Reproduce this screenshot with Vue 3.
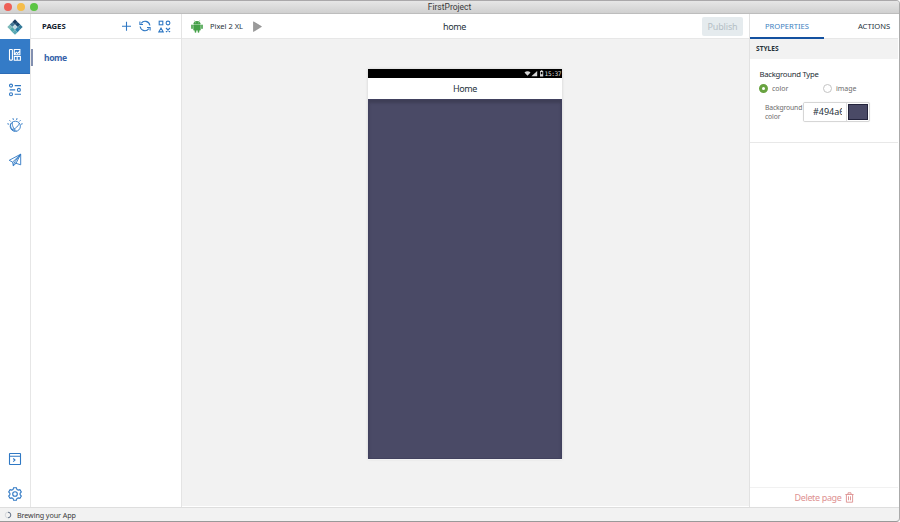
<script setup>
const watsonRays = [-75, -45, -15, 15, 45, 75]
</script>

<template>
  <div class="window">
    <header class="titlebar">
      <div class="lights"><i class="red"></i><i class="amber"></i><i class="green"></i></div>
      <span class="app-title">FirstProject</span>
    </header>

    <div class="workspace">
      <nav class="rail">
        <div class="logo">
          <svg width="16" height="16" viewBox="0 0 16 16">
            <path d="M8 .3 10.6 2.9 8 5.5 5.4 2.9Z" fill="#173a5e" />
            <path d="M5.4 2.9 8 5.5 5.4 8.1 2.8 5.5Z" fill="#417594" />
            <path d="M10.6 2.9 13.2 5.5 10.6 8.1 8 5.5Z" fill="#17456c" />
            <path d="M2.8 5.5 5.4 8.1 2.9 10.6.3 8Z" fill="#79b8b9" />
            <path d="M8 5.5 10.6 8.1 8 10.7 5.4 8.1Z" fill="#c3d9e2" />
            <path d="M13.2 5.5 15.7 8 13.1 10.6 10.6 8.1Z" fill="#327998" />
            <path d="M5.4 8.1 8 10.7 5.4 13.2 2.9 10.6Z" fill="#4fa5aa" />
            <path d="M10.6 8.1 13.1 10.6 10.6 13.2 8 10.7Z" fill="#277da8" />
            <path d="M8 10.7 10.6 13.2 8 15.8 5.4 13.2Z" fill="#59a8b4" />
          </svg>
        </div>
        <button class="rail-item active">
          <svg width="14" height="14" viewBox="0 0 14 14" fill="none" stroke="#fff" stroke-width="1.1">
            <rect x="1.5" y="1.5" width="2.9" height="10.6" rx=".5" />
            <path d="M6.3 1.5h5.6v5.2H6.3zM6.3 8.5h2.9v3.7H6.3zM9.2 8.5h3.2v3.7H9.2zM6.4 6.4l2-2.2 1.2 1.2 2.2-2.2" />
          </svg>
        </button>
        <button class="rail-item">
          <svg width="14" height="14" viewBox="0 0 14 14" class="line">
            <circle cx="3" cy="2.6" r="1.5" /><path d="M6.7 2.6H13M1.7 6.9h5.5M6.7 11.3H13" />
            <circle cx="10.9" cy="6.9" r="1.5" /><circle cx="3" cy="11.3" r="1.5" />
          </svg>
        </button>
        <button class="rail-item">
          <svg width="16" height="16" viewBox="0 0 16 16" class="line thin">
            <circle cx="8.3" cy="9.3" r="5.1" />
            <path d="M4.2 6.2C2.4 9 4.6 13 8 13.9M4 12.2c2.8 1 6.8-2.2 8.4-6M5.5 5.2c-.5 2.9.5 6.5 4 8.9" />
            <path v-for="a in watsonRays" :key="a" d="M8 .9v1.8" :transform="`rotate(${a} 8 8.8)`" />
          </svg>
        </button>
        <button class="rail-item">
          <svg width="14" height="14" viewBox="0 0 14 14" class="line thin">
            <path d="M12.7 1.2 1.2 7.3l3.4 1.8L12.7 1.2V11.8L8 10.3M4.6 9.1l.7 3.7L8 10.3M5.3 12.8l1-3.3 6.4-8.3L8 10.3 6.3 9.5" />
          </svg>
        </button>
        <div class="spacer"></div>
        <button class="rail-item low">
          <svg width="14" height="14" viewBox="0 0 14 14" class="line">
            <rect x="1.5" y="1.5" width="11" height="11" rx=".4" /><path d="M1.5 4.3h11M5.2 6.5 7 8.1 5.2 9.7" />
          </svg>
        </button>
        <button class="rail-item low">
          <svg width="14" height="14" viewBox="0 0 14 14" class="line">
            <path d="M5.6.7h2.8l.5 1.7 1.3.7 1.7-.5 1.4 2.4-1.2 1.3v1.4l1.2 1.3-1.4 2.4-1.7-.5-1.3.7-.5 1.7H5.6l-.5-1.7-1.3-.7-1.7.5L.7 9l1.2-1.3V6.3L.7 5l1.4-2.4 1.7.5 1.3-.7Z" /><circle cx="7" cy="7" r="2.3" />
          </svg>
        </button>
      </nav>

      <aside class="pages">
        <div class="bar pages-head">
          <b>PAGES</b>
          <div class="tools">
            <svg width="11" height="12" viewBox="0 0 11 12" class="line"><path d="M5.5 1.8v9M1 6.3h9" /></svg>
            <svg width="12" height="12" viewBox="0 0 12 12" class="line">
              <path d="M2.2 3.4C4.5-.1 10 .8 10.9 5.5M.9 1.4v3.1H4M9.8 8.6C7.5 12.1 2 11.2 1.1 6.5M11.1 10.6V7.5H8" />
            </svg>
            <svg width="13" height="13" viewBox="0 0 13 13" class="line">
              <rect x="1.2" y="1.2" width="3.6" height="3.6" /><circle cx="10" cy="3" r="1.9" />
              <path d="M3 8 5.2 11.9H.8ZM8 8l4 4M12 8l-4 4" />
            </svg>
          </div>
        </div>
        <a class="page-link">home</a>
      </aside>

      <main class="stage">
        <div class="bar stage-head">
          <div class="device">
            <svg width="12" height="13" viewBox="0 0 12 13" fill="#43a047">
              <path d="M2.3 4.2C2.3 2.2 4 .9 6 .9s3.7 1.3 3.7 3.3Z" />
              <rect x="2.3" y="4.6" width="7.4" height="5.8" rx=".7" />
              <rect x=".2" y="4.6" width="1.6" height="4.4" rx=".8" /><rect x="10.2" y="4.6" width="1.6" height="4.4" rx=".8" />
              <rect x="3.7" y="9" width="1.6" height="3.8" rx=".8" /><rect x="6.7" y="9" width="1.6" height="3.8" rx=".8" />
              <path d="m3.3.4 1 1.5M8.7.4l-1 1.5" stroke="#43a047" stroke-width=".5" />
              <circle cx="4.4" cy="2.8" r=".35" fill="#fff" /><circle cx="7.6" cy="2.8" r=".35" fill="#fff" />
            </svg>
            <span>Pixel 2 XL</span>
            <svg width="9" height="11" viewBox="0 0 9 11"><path d="M.5.8 8.5 5.6.5 10.5Z" fill="#9b9b9b" stroke="#858585" stroke-width=".6" /></svg>
          </div>
          <span class="page-title">home</span>
          <button class="publish">Publish</button>
        </div>
        <div class="canvas">
          <div class="phone">
            <div class="phone-status">
              <svg width="21" height="7" viewBox="0 0 21 7" fill="#d5d5d5">
                <path d="M.5 2.4C2.1.7 4.9.7 6.5 2.4L3.5 5.8Z" /><path d="M13.2.9V6.2H7.4Z" />
                <path d="M16 1h.8V.3h1.6V1h.8v5.6H16Zm.8 1v2.2h1.6V2Z" fill-rule="evenodd" />
              </svg>
              <span>15:37</span>
            </div>
            <div class="phone-head">Home</div>
            <div class="phone-body"></div>
          </div>
        </div>
      </main>

      <aside class="inspector">
        <div class="bar tabs">
          <div class="tab on"><span>PROPERTIES</span></div>
          <div class="tab"><span class="actions">ACTIONS</span></div>
        </div>
        <div class="section"><b>STYLES</b></div>
        <div class="form">
          <div class="label">Background Type</div>
          <div class="radios">
            <label><i class="radio checked"></i><span>color</span></label>
            <label><i class="radio"></i><span>image</span></label>
          </div>
          <div class="color-row">
            <div class="hint">Background<br />color</div>
            <div class="color-input"><input class="hex" type="text" value="#494a66" /><div class="swatch"><i></i></div></div>
          </div>
        </div>
        <div class="spacer"></div>
        <div class="delete">
          <span>Delete page</span>
          <svg width="9" height="11" viewBox="0 0 9 11" fill="none" stroke="#dc8f8f" stroke-width=".9">
            <path d="M.4 2.5h8.2M3 2.3V.8h3v1.5M1.4 2.7v7.5h6.2V2.7M3.5 4.3v4M5.5 4.3v4" />
          </svg>
        </div>
      </aside>
    </div>

    <footer class="statusbar">
      <svg width="8" height="8" viewBox="0 0 8 8" fill="none"><circle cx="4" cy="4" r="2.8" stroke="#d5d8dc" /><path d="M4 1.2A2.8 2.8 0 0 1 4 6.8" stroke="#68768b" /></svg>
      <span>Brewing your App</span>
    </footer>
  </div>
</template>

<style>
body { margin: 0; overflow: hidden; background: #fff; }
</style>

<style scoped>
* { box-sizing: border-box; }
.window { width: 900px; height: 522px; display: flex; flex-direction: column; border-top: 1px solid #aaa8aa; border-right: 1px solid #aaa; border-bottom: 1px solid #999; border-radius: 0 4px 4px 0; background: #f2f2f2; font-family: "Noto Sans", sans-serif; color: #26323b; overflow: hidden; }
button { border: 0; padding: 0; background: none; font-family: inherit; }
svg { display: block; flex: none; }
.line { fill: none; stroke: #2f78c4; stroke-width: 1.1; }
.thin { stroke-width: .9; }
.spacer { flex: 1; }
.titlebar { height: 13px; flex: none; display: grid; grid-template-columns: 1fr auto 1fr; align-items: center; background: linear-gradient(#e6e6e6, #d0d0d0); border-bottom: 1px solid #bdbdbd; }
.lights { display: flex; gap: 5px; padding-left: 4px; }
.lights i { width: 8px; height: 8px; border-radius: 50%; }
.red { background: #ee6056; }
.amber { background: #f5bd4a; }
.green { background: #5cc544; }
.app-title { font: 8.5px/12px Roboto, sans-serif; color: #3a3a3a; }
.workspace { height: 493px; flex: none; display: flex; background: #fff; padding-right: 1px; }
.rail { width: 31px; border-right: 1px solid #e6e6e6; display: flex; flex-direction: column; flex: none; }
.logo { height: 25px; display: flex; align-items: center; justify-content: center; flex: none; }
.rail-item { height: 35px; padding-bottom: 3px; display: flex; align-items: center; justify-content: center; flex: none; }
.rail-item.active { background: #347bc7; border-bottom: 1px solid #2d6bb5; }
.rail-item.low { padding: 9px 0 0; }
.bar { height: 25px; flex: none; border-bottom: 1px solid #e7e7e7; display: flex; align-items: center; }
.pages { width: 151px; flex: none; border-right: 1px solid #e4e4e4; }
.pages-head { padding: 0 10px 0 11px; justify-content: space-between; }
.pages-head b { font-size: 7.7px; color: #14212d; }
.tools { display: flex; align-items: center; gap: 7px; }
.page-link { display: flex; align-items: center; height: 17px; margin-top: 10px; padding-left: 11px; border-left: 2px solid #8290b0; font-size: 8.6px; letter-spacing: -.45px; font-weight: 700; color: #3763aa; }
.stage { width: 568px; flex: none; display: flex; flex-direction: column; border-right: 1px solid #e2e2e2; }
.stage-head { display: grid; grid-template-columns: 250px auto 1fr; padding: 0 6px 0 10px; justify-items: start; }
.device { display: flex; align-items: center; font-size: 7.5px; margin-left: -1px; }
.device span { margin: 0 10px 0 7px; }
.page-title { font-size: 9px; letter-spacing: -.4px; padding-left: 1px; }
.publish { justify-self: end; width: 41px; height: 19px; border-radius: 2px; background: #e5ebee; color: #b4bec5; font-size: 9px; letter-spacing: -.15px; }
.canvas { flex: 1; background: #f2f2f2; padding: 30px 0 0 186px; border-bottom: 1px solid #fff; }
.phone { width: 194px; height: 390px; display: flex; flex-direction: column; box-shadow: 0 0 3px rgba(0, 0, 0, .14), 0 1px 0 #fff; }
.phone-status { height: 9px; background: #000; display: flex; align-items: center; justify-content: flex-end; padding-right: 1px; color: #ddd; font: 6.2px/9px "DejaVu Sans Mono", monospace; letter-spacing: -.45px; }
.phone-head { height: 21px; background: #fff; font-size: 9px; letter-spacing: -.4px; line-height: 21px; text-align: center; }
.phone-body { flex: 1; background: #4a4a66; border: 1px solid #41415e; box-shadow: inset 0 3px 3px rgba(0, 0, 0, .16); }
.inspector { flex: 1; display: flex; flex-direction: column; min-width: 0; }
.tabs { align-items: stretch; font-size: 7.6px; }
.tab { width: 50%; display: flex; align-items: center; justify-content: center; }
.tab.on { color: #3e82bf; border-bottom: 2px solid #1451a0; margin-bottom: -1px; padding-top: 1px; }
.actions { padding-left: 26px; }
.section { height: 20px; flex: none; background: #f2f2f2; padding-left: 6px; font-size: 6.6px; line-height: 20px; }
.form { height: 84px; flex: none; padding: 9px 8px 0 9px; border-bottom: 1px solid #e8e8e8; }
.label { font-size: 7.7px; letter-spacing: -.25px; line-height: 12px; color: #222c35; padding-left: .5px; }
.radios { display: flex; height: 16px; font-size: 7px; letter-spacing: -.05px; color: #6c6c6c; }
.radios label { width: 64px; display: flex; align-items: center; gap: 4px; }
.radio { width: 9px; height: 9px; border: 1px solid #c4c4c4; border-radius: 50%; background: #fff; }
.radio.checked { border: 3px solid #69a341; }
.color-row { display: flex; padding-left: 6px; margin-top: 6px; }
.hint { width: 38px; font-size: 6.8px; letter-spacing: -.15px; line-height: 9px; color: #6c6c6c; padding-top: 1px; }
.color-input { width: 67px; height: 20px; border: 1px solid #d6d6d6; border-radius: 2px; display: flex; overflow: hidden; box-shadow: 0 0 1px #ddd; }
.hex { width: 43px; height: 18px; border: 0; border-right: 1px solid #ddd; padding: 0 4px 0 9px; font: 9px/18px "Noto Sans", sans-serif; color: #26323b; outline: 0; background: #fff; }
.swatch { flex: 1; padding: 1px; display: flex; }
.swatch i { flex: 1; background: #4a4a66; border: 1px solid #24243c; }
.delete { height: 20px; flex: none; border-top: 1px solid #f1f1f1; display: flex; align-items: center; justify-content: center; gap: 3px; padding-bottom: 1px; font-size: 9px; letter-spacing: -.35px; color: #de9292; }
.statusbar { flex: 1; border-top: 1px solid #dedede; display: flex; align-items: center; padding-left: 4px; gap: 5px; font-size: 7.2px; letter-spacing: -.1px; color: #3a3a3a; }
</style>
